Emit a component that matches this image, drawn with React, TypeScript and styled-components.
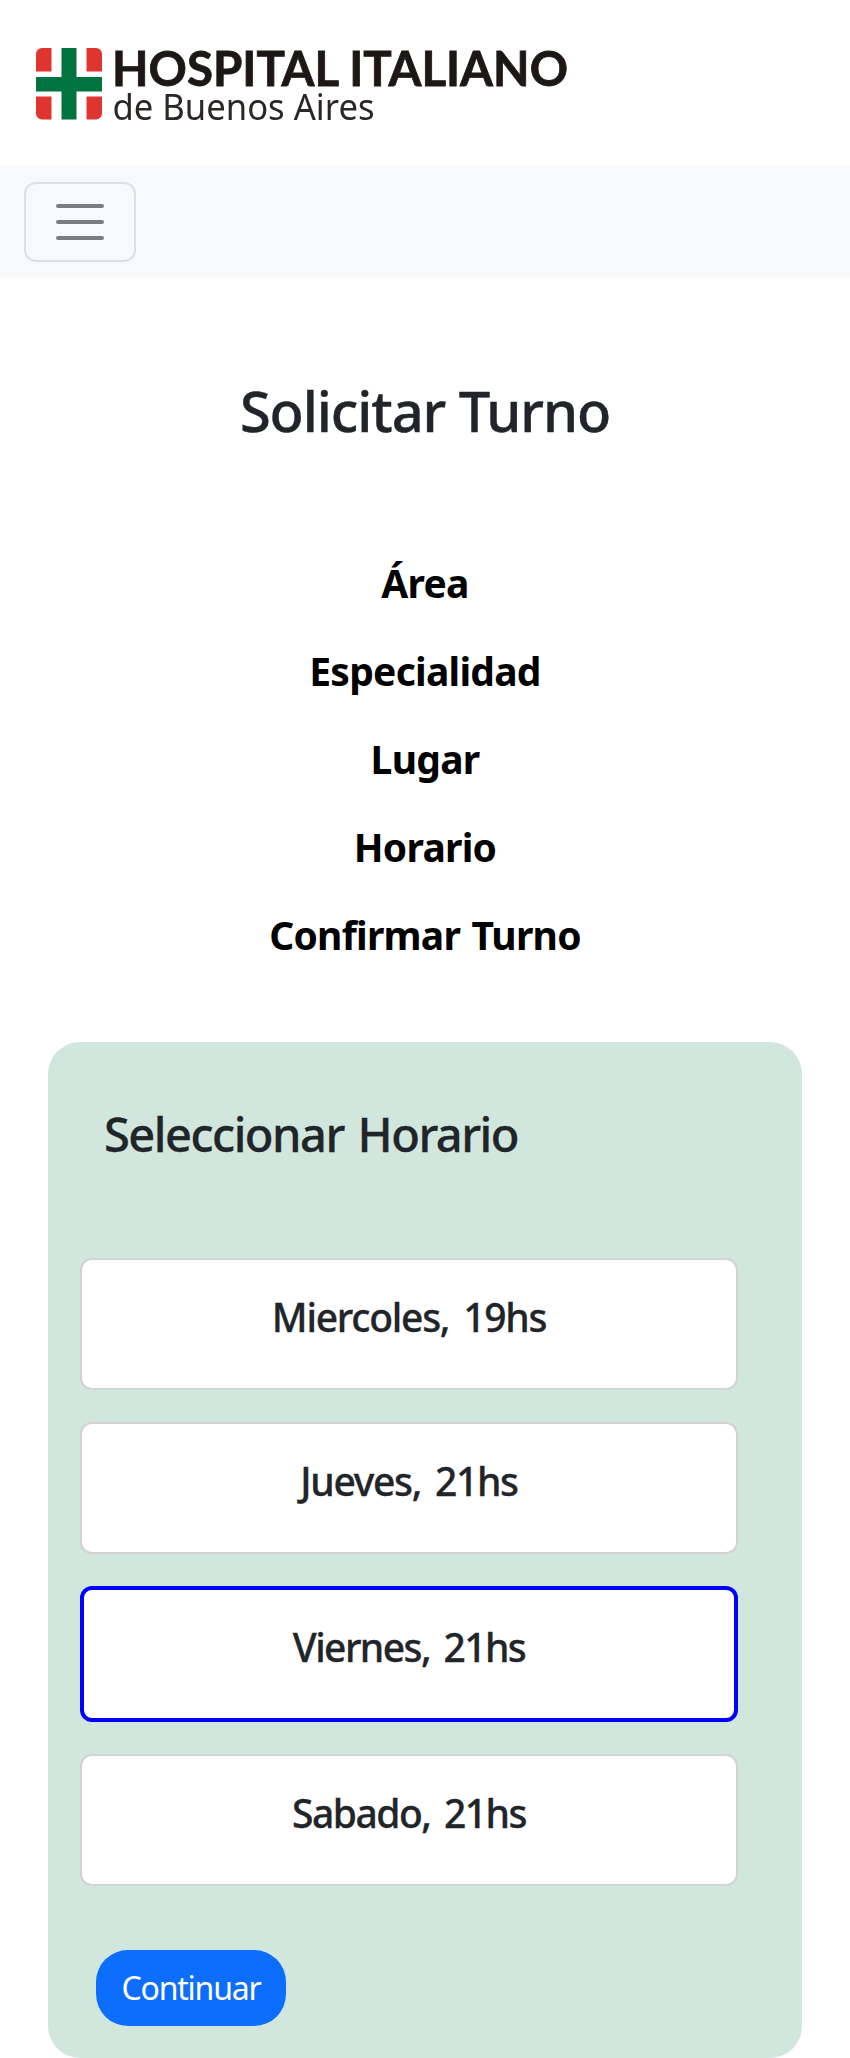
import React, { useState } from "react";
import styled, { createGlobalStyle } from "styled-components";

const GlobalStyle = createGlobalStyle`
  *, *::before, *::after { box-sizing: border-box; }
  body {
    margin: 0;
    background: #fff;
    color: #212529;
    font-family: "Segoe UI", "Noto Sans", "Liberation Sans", sans-serif;
  }
  h1, h2, h3, ol { margin: 0; padding: 0; }
`;

const Header = styled.header`
  height: 166px;
`;

const LogoDrawing = styled.svg`
  display: block;
  filter: blur(0.5px);
`;

const Navbar = styled.nav`
  display: flex;
  align-items: center;
  height: 112px;
  padding: 0 24px;
  background: #f8f9fb;
`;

const Toggler = styled.button`
  display: flex;
  align-items: center;
  justify-content: center;
  width: 112px;
  height: 80px;
  padding: 0;
  background: transparent;
  border: 2px solid #dedfe1;
  border-radius: 12px;
`;

const Main = styled.main`
  padding: 99px 48px 0;
`;

const PageTitle = styled.h1`
  font-size: 56px;
  font-weight: 500;
  line-height: 67px;
  letter-spacing: -1.08px;
  text-align: center;
  -webkit-text-stroke: 0.4px currentColor;
`;

const Steps = styled.ol`
  margin-top: 95px;
  list-style: none;
`;

const Step = styled.li`
  color: #000;
  font-size: 39px;
  font-weight: 700;
  line-height: 88px;
  letter-spacing: -0.75px;
  word-spacing: 2px;
  text-align: center;
`;

const Panel = styled.section`
  display: flex;
  flex-direction: column;
  align-items: flex-start;
  height: 1016px;
  margin-top: 63px;
  padding: 63px 32px 32px;
  background: #d1e7dd;
  border-radius: 32px;
`;

const PanelTitle = styled.h2`
  padding-left: 24px;
  font-size: 47px;
  font-weight: 500;
  line-height: 58px;
  letter-spacing: -1.5px;
  word-spacing: 3px;
  -webkit-text-stroke: 0.3px currentColor;
`;

const SlotList = styled.div`
  display: flex;
  flex-direction: column;
  gap: 32px;
  width: 658px;
  margin-top: 95px;
`;

const Slot = styled.div<{ $selected: boolean }>`
  box-sizing: content-box;
  height: 95px;
  padding-top: 33px;
  background: #fff;
  border: ${(p) => (p.$selected ? "4px solid #00f" : "2px solid #d2d2d2")};
  border-radius: 12px;
  cursor: pointer;
`;

const SlotLabel = styled.h3<{ $tracking: number }>`
  font-size: 39px;
  font-weight: 500;
  line-height: 48px;
  letter-spacing: ${(p) => p.$tracking}px;
  word-spacing: 5px;
  text-align: center;
  -webkit-text-stroke: 0.3px currentColor;
`;

const ContinueButton = styled.button`
  width: 190px;
  height: 76px;
  margin: 64px 0 0 16px;
  padding: 0;
  color: #fff;
  background: #0d6efd;
  border: 0;
  border-radius: 32px;
  font-family: inherit;
  font-size: 32px;
  line-height: 48px;
  letter-spacing: -1.2px;
`;

const steps = ["Área", "Especialidad", "Lugar", "Horario", "Confirmar Turno"];

const slots = [
  { label: "Miercoles, 19hs", tracking: -1.25 },
  { label: "Jueves, 21hs", tracking: -1.3 },
  { label: "Viernes, 21hs", tracking: -1.58 },
  { label: "Sabado, 21hs", tracking: -1.5 },
];

function Logo() {
  return (
    <LogoDrawing width="600" height="166" viewBox="0 0 600 166" role="img" aria-label="Hospital Italiano de Buenos Aires">
      <g fill="#de352f">
        <path d="M42 48H51.5V71.5H36V54A6 6 0 0 1 42 48Z" />
        <path d="M86.5 48H96A6 6 0 0 1 102 54V71.5H86.5Z" />
        <path d="M36 96.5H51.5V119.5H42A6 6 0 0 1 36 113.5Z" />
        <path d="M86.5 96.5H102V113.5A6 6 0 0 1 96 119.5H86.5Z" />
      </g>
      <path d="M61.5 48H76.5V77H102V91.5H76.5V119.5H61.5V91.5H36V77H61.5Z" fill="#00733e" />
      <text x="112" y="85.5" fill="#1d1815" stroke="#1d1815" strokeWidth="0.8" fontFamily="Lato, sans-serif" fontSize="48" fontWeight="700" textLength="456" lengthAdjust="spacingAndGlyphs">
        HOSPITAL ITALIANO
      </text>
      <text x="112.5" y="119.5" fill="#2b2725" fontFamily='"Noto Sans", sans-serif' fontSize="35.5" textLength="262" lengthAdjust="spacingAndGlyphs">
        de Buenos Aires
      </text>
    </LogoDrawing>
  );
}

function MenuIcon() {
  return (
    <svg width="60" height="60" viewBox="0 0 30 30" fill="none" stroke="#7b7c7d" strokeWidth="2" strokeLinecap="round" strokeMiterlimit="10">
      <path d="M4 7h22M4 15h22M4 23h22" />
    </svg>
  );
}

export default function App() {
  const [selected, setSelected] = useState(2);
  return (
    <>
      <GlobalStyle />
      <Header>
        <Logo />
      </Header>
      <Navbar>
        <Toggler aria-label="Menu">
          <MenuIcon />
        </Toggler>
      </Navbar>
      <Main>
        <PageTitle>Solicitar Turno</PageTitle>
        <Steps>
          {steps.map((step) => (
            <Step key={step}>{step}</Step>
          ))}
        </Steps>
        <Panel>
          <PanelTitle>Seleccionar Horario</PanelTitle>
          <SlotList>
            {slots.map((slot, i) => (
              <Slot key={slot.label} $selected={i === selected} onClick={() => setSelected(i)}>
                <SlotLabel $tracking={slot.tracking}>{slot.label}</SlotLabel>
              </Slot>
            ))}
          </SlotList>
          <ContinueButton>Continuar</ContinueButton>
        </Panel>
      </Main>
    </>
  );
}
